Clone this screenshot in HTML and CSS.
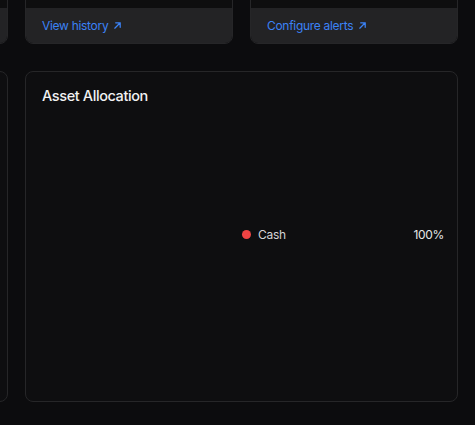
FILE: index.html
```html
<!DOCTYPE html>
<html>
<head>
<meta charset="utf-8">
<link rel="stylesheet" href="styles.css">
</head>
<body>
<div class="page">
  <div class="grid">
    <div class="card stat">
      <div class="stat-body"></div>
      <div class="stat-foot"></div>
    </div>
    <div class="card stat">
      <div class="stat-body"></div>
      <div class="stat-foot"><a class="link" href="#">View history <svg class="arrow" viewBox="0 0 10 10"><path d="M2 8 L8 2 M3 2 H8 V7"/></svg></a></div>
    </div>
    <div class="card stat">
      <div class="stat-body"></div>
      <div class="stat-foot"><a class="link" href="#">Configure alerts <svg class="arrow" viewBox="0 0 10 10"><path d="M2 8 L8 2 M3 2 H8 V7"/></svg></a></div>
    </div>

    <div class="card panel"></div>
    <div class="card panel wide">
      <h2 class="panel-title">Asset Allocation</h2>
      <div class="alloc">
        <div class="chart"></div>
        <ul class="legend">
          <li class="legend-row"><span class="dot dot-cash"></span><span class="legend-name">Cash</span><span class="legend-val">100%</span></li>
        </ul>
      </div>
    </div>
  </div>
</div>
</body>
</html>
```

FILE: styles.css
```css
html, body {
  margin: 0;
  padding: 0;
  background: #0c0c0e;
  font-family: Inter, "Liberation Sans", sans-serif;
  overflow: hidden;
}
.page {
  height: 425px;
  overflow: hidden;
}
.grid {
  display: grid;
  grid-template-columns: 208px 208px 208px;
  column-gap: 17px;
  row-gap: 27px;
  margin-left: -200px;
  margin-top: -60px;
}
.card {
  border: 1px solid #262628;
  border-radius: 8px;
  background: #0e0e10;
  box-sizing: border-box;
  overflow: hidden;
}
.stat {
  display: flex;
  flex-direction: column;
  height: 104px;
}
.stat-body {
  flex: 1;
  background: #0e0e0f;
}
.stat-foot {
  height: 35px;
  background: #232325;
  display: flex;
  align-items: center;
  padding: 0 16px;
  box-sizing: border-box;
}
.link {
  color: #3b82f6;
  font-size: 12px;
  letter-spacing: -0.3px;
  text-decoration: none;
  display: inline-flex;
  align-items: center;
  gap: 5px;
}
.arrow {
  width: 9px;
  height: 9px;
  fill: none;
  stroke: #3b82f6;
  stroke-width: 1.4;
  stroke-linecap: round;
  stroke-linejoin: round;
}
.panel {
  height: 331px;
}
.wide {
  grid-column: span 2;
  padding: 15px 16px 16px;
}
.panel-title {
  margin: 0;
  font-size: 14.5px;
  letter-spacing: -0.4px;
  line-height: 18px;
  font-weight: 500;
  color: #f2f2f3;
}
.alloc {
  display: flex;
  align-items: center;
  height: 240px;
  margin-top: 9px;
  margin-right: -3px;
}
.chart {
  flex: 1;
}
.legend {
  flex: 1;
  list-style: none;
  margin: 0 0 0 -2px;
  padding: 0;
}
.legend-row {
  display: flex;
  align-items: center;
  font-size: 12px;
  letter-spacing: -0.3px;
  color: #d4d4d6;
}
.dot {
  width: 9px;
  height: 9px;
  border-radius: 50%;
  margin-right: 7px;
}
.dot-cash {
  background: #ef4444;
}
.legend-name {
  flex: 1;
}
.legend-val {
  color: #e6e6e8;
}
```
